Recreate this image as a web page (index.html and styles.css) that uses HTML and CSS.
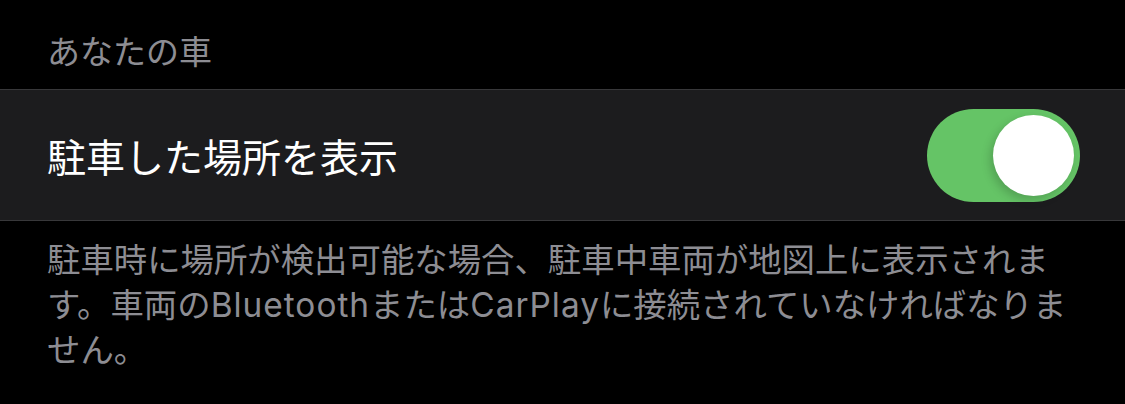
FILE: index.html
```html
<!DOCTYPE html>
<html lang="ja">
<head>
    <meta charset="UTF-8">
    <meta name="viewport" content="width=device-width, initial-scale=1.0">
    <title>あなたの車</title>
    <link rel="stylesheet" href="styles.css">
</head>
<body>
    <div class="settings">
        <div class="group-header">あなたの車</div>
        <div class="cell">
            <span class="cell-label">駐車した場所を表示</span>
            <label class="switch">
                <input type="checkbox" checked>
                <span class="track"><span class="knob"></span></span>
            </label>
        </div>
        <p class="group-footer">駐車時に場所が検出可能な場合、駐車中車両が地図上に表示されます。車両の<span class="latin">Bluetooth</span>または<span class="latin">CarPlay</span>に接続されていなければなりません。</p>
    </div>
</body>
</html>
```

FILE: styles.css
```css
body {
    margin: 0;
    background: #000;
    font-family: Inter, "Noto Sans CJK JP", sans-serif;
}

.settings {
    width: 100%;
}

/* Section title */
.group-header {
    height: 89px;
    box-sizing: border-box;
    padding: 0 47px 14px;
    display: flex;
    align-items: flex-end;
    font-size: 33px;
    line-height: 45px;
    color: #8d8d93;
}

/* Row with switch */
.cell {
    height: 132px;
    box-sizing: border-box;
    border-top: 1px solid #38383a;
    border-bottom: 1px solid #38383a;
    background: #1c1c1e;
    display: flex;
    align-items: center;
    justify-content: space-between;
    padding: 0 45px 0 47px;
}

.cell-label {
    font-size: 39px;
    color: #fff;
}

.switch input {
    display: none;
}

.switch .track {
    display: flex;
    align-items: center;
    justify-content: flex-end;
    width: 153px;
    height: 93px;
    box-sizing: border-box;
    padding: 0 6px;
    border-radius: 47px;
    background: #65c466;
}

.switch .knob {
    width: 81px;
    height: 81px;
    border-radius: 50%;
    background: #fff;
    box-shadow: -3px 4px 10px rgba(0, 0, 0, 0.18);
}

/* Explanation under the row */
.group-footer {
    margin: 0;
    padding: 17px 53px 0 47px;
    font-size: 33.4px;
    line-height: 45px;
    color: #8d8d93;
}

.group-footer .latin {
    letter-spacing: 1px;
}
```
